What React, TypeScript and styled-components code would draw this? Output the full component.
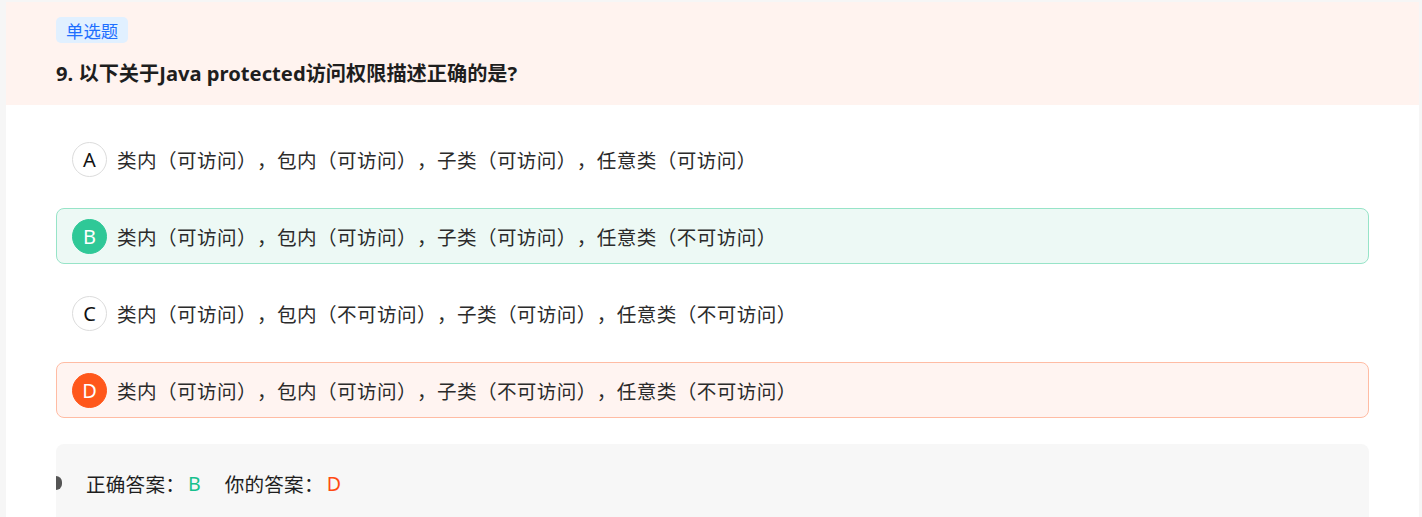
import React from "react";
import styled, { createGlobalStyle, css } from "styled-components";

const GlobalStyle = createGlobalStyle`
  html, body {
    margin: 0;
    padding: 0;
    background: #f6f6f6;
    font-family: "Noto Sans", "Noto Sans CJK SC", sans-serif;
    overflow: hidden;
    text-spacing-trim: space-all;
  }
`;

const Page = styled.div`
  padding: 2px 3px 0 6px;
  height: 517px;
  box-sizing: border-box;
  overflow: hidden;
`;

const Card = styled.div`
  background: #ffffff;
  display: flex;
  flex-direction: column;
`;

const Header = styled.div`
  background: #fff3ef;
  padding: 15px 50px 18px;
  display: flex;
  flex-direction: column;
  align-items: flex-start;
`;

const Tag = styled.span`
  display: inline-flex;
  align-items: center;
  height: 26px;
  padding: 0 10px;
  border-radius: 5px;
  background: #e1f0ff;
  color: #1f6fff;
  font-family: "Noto Sans CJK SC", sans-serif;
  font-size: 17.4px;
`;

const Title = styled.h2`
  margin: 16px 0 0;
  font-size: 20.2px;
  line-height: 28px;
  font-weight: 700;
  color: #1e1e1e;
  font-family: "Noto Sans", "Noto Sans CJK SC", sans-serif;
`;

const Body = styled.div`
  padding: 26px 50px 0;
  display: flex;
  flex-direction: column;
`;

const OptionList = styled.div`
  display: flex;
  flex-direction: column;
  gap: 21px;
`;

type Status = "none" | "correct" | "wrong";

const Option = styled.div<{ $status: Status }>`
  height: 56px;
  box-sizing: border-box;
  display: flex;
  align-items: center;
  gap: 10px;
  padding: 0 15px;
  border-radius: 8px;
  border: 1px solid transparent;
  ${(p) =>
    p.$status === "correct" &&
    css`
      background: #edf9f5;
      border-color: #97e4c8;
    `}
  ${(p) =>
    p.$status === "wrong" &&
    css`
      background: #fff4f1;
      border-color: #ffbca4;
    `}
`;

const Letter = styled.span<{ $status: Status }>`
  width: 35px;
  height: 35px;
  flex: none;
  box-sizing: border-box;
  border-radius: 50%;
  display: flex;
  align-items: center;
  justify-content: center;
  font-family: "Noto Sans", sans-serif;
  font-size: 20px;
  border: 1px solid #dcdcdc;
  background: #ffffff;
  color: #111111;
  ${(p) =>
    p.$status === "correct" &&
    css`
      background: #2fc897;
      border-color: #2fc897;
      color: #ffffff;
    `}
  ${(p) =>
    p.$status === "wrong" &&
    css`
      background: #ff571b;
      border-color: #ff571b;
      color: #ffffff;
    `}
`;

const OptionText = styled.span`
  font-family: "Noto Sans CJK SC", sans-serif;
  font-size: 19.6px;
  letter-spacing: 0.4px;
  color: #2b2b2b;
  white-space: nowrap;
  text-spacing-trim: space-all;
`;

const Summary = styled.div`
  margin-top: 26px;
  background: #f7f7f7;
  border-radius: 8px;
  height: 160px;
  padding-top: 27px;
  box-sizing: border-box;
  display: flex;
  align-items: flex-start;
`;

const SummaryRow = styled.div`
  display: flex;
  align-items: center;
  height: 24px;
`;

const Marker = styled.span`
  width: 6px;
  height: 14px;
  background: #555555;
  border-radius: 0 7px 7px 0;
  margin-right: 24px;
  flex: none;
`;

const Label = styled.span`
  font-family: "Noto Sans CJK SC", sans-serif;
  font-size: 19.6px;
  letter-spacing: 0.2px;
  color: #1e1e1e;
  text-spacing-trim: space-all;
`;

const Answer = styled.span<{ $color: string }>`
  font-family: "Noto Sans", sans-serif;
  font-size: 19.6px;
  color: ${(p) => p.$color};
  margin-left: 3px;
  margin-right: 24px;
`;

const options: { key: string; text: string; status: Status }[] = [
  { key: "A", text: "类内（可访问），包内（可访问），子类（可访问），任意类（可访问）", status: "none" },
  { key: "B", text: "类内（可访问），包内（可访问），子类（可访问），任意类（不可访问）", status: "correct" },
  { key: "C", text: "类内（可访问），包内（不可访问），子类（可访问），任意类（不可访问）", status: "none" },
  { key: "D", text: "类内（可访问），包内（可访问），子类（不可访问），任意类（不可访问）", status: "wrong" },
];

export default function App() {
  return (
    <>
      <GlobalStyle />
      <Page>
        <Card>
          <Header>
            <Tag>单选题</Tag>
            <Title>9. 以下关于Java protected访问权限描述正确的是?</Title>
          </Header>
          <Body>
            <OptionList>
              {options.map((o) => (
                <Option key={o.key} $status={o.status}>
                  <Letter $status={o.status}>{o.key}</Letter>
                  <OptionText>{o.text}</OptionText>
                </Option>
              ))}
            </OptionList>
            <Summary>
              <SummaryRow>
                <Marker />
                <Label>正确答案：</Label>
                <Answer $color="#17c08d">B</Answer>
                <Label>你的答案：</Label>
                <Answer $color="#ff4a12">D</Answer>
              </SummaryRow>
            </Summary>
          </Body>
        </Card>
      </Page>
    </>
  );
}
